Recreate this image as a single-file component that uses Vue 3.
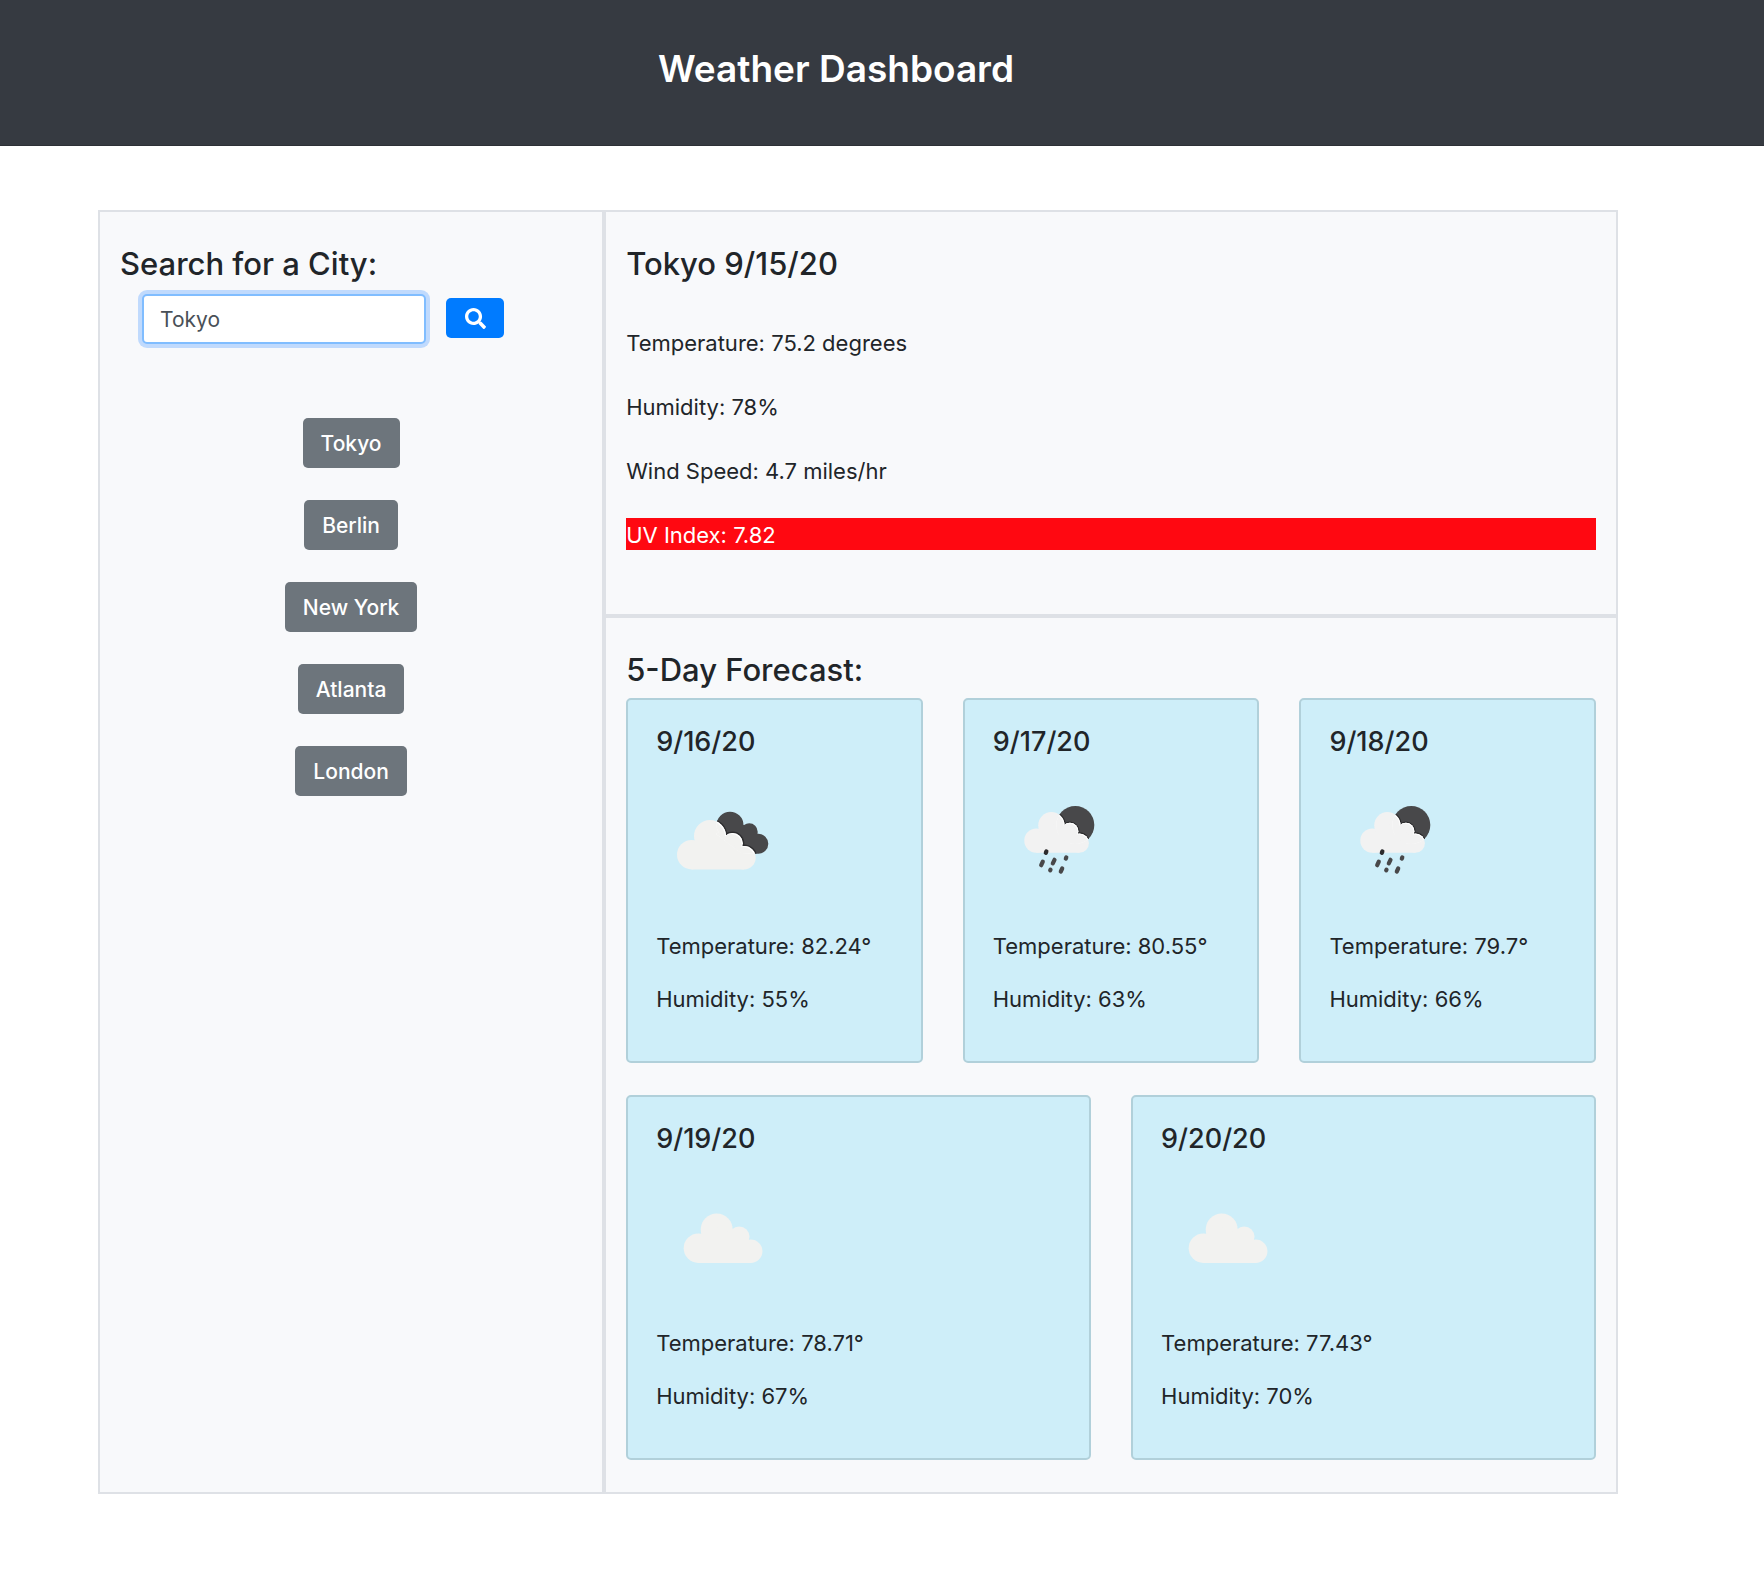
<script setup>
import { ref } from 'vue'

const query = ref('Tokyo')
const cities = ['Tokyo', 'Berlin', 'New York', 'Atlanta', 'London']
const rows = [
  [
    { date: '9/16/20', icon: 'clouds', temp: '82.24', humidity: 55 },
    { date: '9/17/20', icon: 'rain', temp: '80.55', humidity: 63 },
    { date: '9/18/20', icon: 'rain', temp: '79.7', humidity: 66 },
  ],
  [
    { date: '9/19/20', icon: 'cloud', temp: '78.71', humidity: 67 },
    { date: '9/20/20', icon: 'cloud', temp: '77.43', humidity: 70 },
  ],
]
</script>

<template>
  <div class="page">
    <svg class="defs" aria-hidden="true">
      <defs>
        <g id="puff">
          <circle cx="35.7" cy="80.7" r="14.7" />
          <circle cx="54" cy="62" r="16" />
          <circle cx="76.5" cy="69.3" r="10.3" />
          <circle cx="88" cy="83.7" r="11.7" />
        </g>
        <path id="puff-base" d="M35.7 95.4V72L54 60L76 68L84 75L88 77V95.4Z" />
        <clipPath id="behind-clouds">
          <circle cx="74" cy="51.2" r="13.5" />
          <circle cx="93.2" cy="57.8" r="8.5" />
          <circle cx="102.3" cy="69.7" r="10" />
          <path d="M74 51L90 51L100 62L102 79.7L85 79L60 60Z" />
        </clipPath>
        <clipPath id="behind-rain">
          <circle cx="82.3" cy="51" r="19" />
        </clipPath>
      </defs>
    </svg>

    <header class="banner">
      <h1>Weather Dashboard</h1>
    </header>

    <main class="board">
      <aside class="panel search">
        <h2><label for="city">Search for a City:</label></h2>
        <form class="search-row" @submit.prevent>
          <input id="city" v-model="query" type="text" autocomplete="off" />
          <button class="go" type="submit" aria-label="Search">
            <svg viewBox="0 0 512 512" aria-hidden="true">
              <path
                fill="currentColor"
                d="M505 442.7L405.3 343c-4.500-4.500-10.600-7-17-7H372c27.600-35.300 44-79.700 44-128C416 93.100 322.900 0 208 0S0 93.100 0 208s93.100 208 208 208c48.300 0 92.700-16.400 128-44v16.300c0 6.400 2.500 12.500 7 17l99.700 99.700c9.400 9.400 24.600 9.400 33.900 0l28.300-28.300c9.400-9.400 9.400-24.600.1-34zM208 336c-70.700 0-128-57.200-128-128 0-70.700 57.200-128 128-128 70.700 0 128 57.200 128 128 0 70.700-57.200 128-128 128z"
              />
            </svg>
          </button>
        </form>
        <ul class="history">
          <li v-for="city in cities" :key="city">
            <button class="city" type="button" @click="query = city">{{ city }}</button>
          </li>
        </ul>
      </aside>

      <section class="panel current">
        <h2>Tokyo 9/15/20</h2>
        <div class="readings">
          <p>Temperature: 75.2 degrees</p>
          <p>Humidity: 78%</p>
          <p>Wind Speed: 4.7 miles/hr</p>
          <p class="uv">UV Index: 7.82</p>
        </div>
      </section>

      <section class="panel forecast">
        <h2>5-Day Forecast:</h2>
        <div class="days">
          <div v-for="(row, i) in rows" :key="i" class="day-row">
            <article v-for="day in row" :key="day.date" class="day">
              <h3>{{ day.date }}</h3>
              <svg class="weather" viewBox="0 0 133 133" aria-hidden="true">
                <template v-if="day.icon === 'clouds'">
                  <g clip-path="url(#behind-clouds)">
                    <rect width="133" height="133" fill="#48484a" />
                    <use href="#puff" fill="#2c2c2e" stroke="#2c2c2e" stroke-width="3" />
                  </g>
                  <g fill="#f2f2f0">
                    <use href="#puff" />
                    <use href="#puff-base" />
                  </g>
                  <g clip-path="url(#behind-clouds)">
                    <use href="#puff" fill="#fff" />
                    <g fill="#f2f2f0" transform="translate(-1 1)">
                      <use href="#puff" />
                      <use href="#puff-base" />
                    </g>
                  </g>
                </template>
                <template v-else-if="day.icon === 'rain'">
                  <g clip-path="url(#behind-rain)">
                    <rect width="133" height="133" fill="#48484a" />
                    <g transform="translate(14 0.3) scale(0.822)">
                      <use href="#puff" fill="#2c2c2e" stroke="#2c2c2e" stroke-width="3" />
                    </g>
                  </g>
                  <g fill="#f2f2f2" transform="translate(14 0.3) scale(0.822)">
                    <use href="#puff" />
                    <use href="#puff-base" />
                  </g>
                  <g clip-path="url(#behind-rain)">
                    <g transform="translate(14 0.3) scale(0.822)">
                      <use href="#puff" fill="#fff" />
                      <g fill="#f2f2f2" transform="translate(-1 1)">
                        <use href="#puff" />
                        <use href="#puff-base" />
                      </g>
                    </g>
                  </g>
                  <g stroke="#48484a" stroke-width="4.200" stroke-linecap="round">
                    <path stroke="#2c2c2e" d="M53.400 77.400L52.800 78.900" />
                    <path d="M49.800 87.600L48.200 91.200" />
                    <path d="M61.500 85.800L59.800 89.400" />
                    <path d="M73.300 83.400L72.800 84.600" />
                    <path d="M57.500 95.700L57.200 96.300" />
                    <path d="M69.200 94.500L67.800 97.500" />
                  </g>
                </template>
                <g v-else fill="#f2f2f0" transform="translate(6.700 -3.500)">
                  <use href="#puff" />
                  <use href="#puff-base" />
                </g>
              </svg>
              <div class="day-readings">
                <p>Temperature: {{ day.temp }}°</p>
                <p>Humidity: {{ day.humidity }}%</p>
              </div>
            </article>
          </div>
        </div>
      </section>
    </main>
  </div>
</template>

<style>
body {
  margin: 0;
  background: #fff;
}
</style>

<style scoped>
.page {
  color: #212529;
  font-family: Inter, "Liberation Sans", sans-serif;
  font-size: 21px;
  line-height: 32px;
}

.page * {
  box-sizing: border-box;
}

.defs {
  position: absolute;
  width: 0;
  height: 0;
}

h1,
h2,
h3,
p,
ul {
  margin: 0;
  padding: 0;
  font-weight: 500;
}

p {
  padding-top: 2px;
  font-size: 22px;
  font-weight: 400;
  line-height: 30px;
}

.banner {
  padding: 44px 92px 51px 0;
  border-bottom: 1px solid #2d3036;
  background: #363a41;
  color: #fff;
  text-align: center;
}

h1 {
  font-size: 37px;
  font-weight: 600;
  line-height: 50px;
}

h2 {
  padding-top: 2px;
  font-size: 31px;
  line-height: 36px;
}

h3 {
  margin-bottom: 16px;
  font-size: 27px;
  line-height: 32px;
}

.board {
  display: grid;
  grid-template-columns: 33.3% 1fr;
  margin: 64px 146px 84px 98px;
}

.panel {
  padding: 32px 20px;
  border: 2px solid #dee1e6;
  background: #f8f9fb;
}

.search {
  grid-row: span 2;
}

.search-row {
  display: flex;
  align-items: center;
  gap: 20px;
  margin: 12px 0 0 22px;
}

.search-row input {
  flex: 0 1 284px;
  min-width: 0;
  height: 50px;
  padding: 0 16px;
  border: 2px solid #80bdff;
  border-radius: 5px;
  outline: 0;
  background: #fff;
  box-shadow: 0 0 0 4px #c0dafd;
  color: #495057;
  font: inherit;
}

button {
  border: 0;
  border-radius: 5px;
  color: #fff;
  font: inherit;
  cursor: pointer;
}

.go {
  display: flex;
  align-items: center;
  justify-content: center;
  width: 58px;
  height: 40px;
  margin-bottom: 2px;
  padding: 0;
  background: #007bff;
}

.go svg {
  width: 21px;
  height: 21px;
}

.history {
  display: flex;
  flex-direction: column;
  align-items: center;
  gap: 32px;
  margin-top: 74px;
  list-style: none;
}

.city {
  display: block;
  padding: 10px 18px 8px;
  background: #6d757c;
}

.readings {
  display: flex;
  flex-direction: column;
  gap: 32px;
  margin: 44px 0 32px;
}

.uv {
  background: #ff0811;
  color: #fff;
}

.days {
  display: flex;
  flex-direction: column;
  gap: 32px;
  margin-top: 10px;
}

.day-row {
  display: flex;
  gap: 40px;
}

.day {
  flex: 1 1 0;
  padding: 26px 28px 47px;
  border: 2px solid #b1d0da;
  border-radius: 5px;
  background: #ceeef9;
}

.weather {
  display: block;
  width: 133px;
  height: 133px;
}

.day-readings {
  display: flex;
  flex-direction: column;
  gap: 21px;
  margin-top: 22px;
}
</style>
